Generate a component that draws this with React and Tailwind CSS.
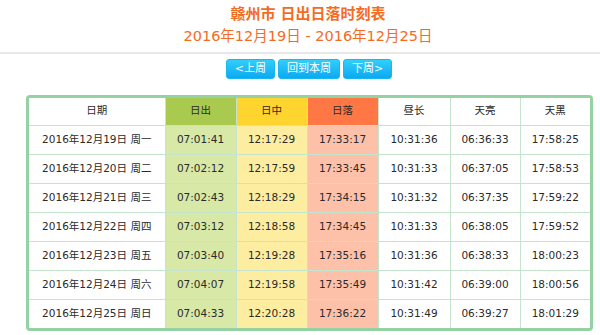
import React from "react";

const rows = [
  ["2016年12月19日 周一", "07:01:41", "12:17:29", "17:33:17", "10:31:36", "06:36:33", "17:58:25"],
  ["2016年12月20日 周二", "07:02:12", "12:17:59", "17:33:45", "10:31:33", "06:37:05", "17:58:53"],
  ["2016年12月21日 周三", "07:02:43", "12:18:29", "17:34:15", "10:31:32", "06:37:35", "17:59:22"],
  ["2016年12月22日 周四", "07:03:12", "12:18:58", "17:34:45", "10:31:33", "06:38:05", "17:59:52"],
  ["2016年12月23日 周五", "07:03:40", "12:19:28", "17:35:16", "10:31:36", "06:38:33", "18:00:23"],
  ["2016年12月24日 周六", "07:04:07", "12:19:58", "17:35:49", "10:31:42", "06:39:00", "18:00:56"],
  ["2016年12月25日 周日", "07:04:33", "12:20:28", "17:36:22", "10:31:49", "06:39:27", "18:01:29"],
];

const bodyBg = ["bg-white", "bg-[#d7e8a7]", "bg-[#fdeda0]", "bg-[#fdc1a9]", "bg-white", "bg-white", "bg-white"];
const widths = ["w-[136px]", "w-[71px]", "w-[71px]", "w-[71px]", "w-[72px]", "w-[70px]", "w-[70px]"];

export default function App() {
  return (
    <div className="w-[600px] h-[335px] bg-white overflow-hidden font-['DejaVu_Sans','Noto_Sans_CJK_SC',sans-serif]">
      {/* TITLE */}
      <div className="pt-[4px] pb-[6px] border-b-2 border-[#e8e8e8] text-center text-[#f36c1f]">
        <h1 className="pl-[16px] text-[15px] font-bold leading-[20px]">赣州市 日出日落时刻表</h1>
        <p className="pl-[16px] text-[14.5px] leading-[20px] mt-[2px]">2016年12月19日 - 2016年12月25日</p>
      </div>

      {/* WEEK NAV */}
      <div className="flex justify-center gap-[3px] mt-[5px] pl-[18px]">
        {["<上周", "回到本周", "下周>"].map((t) => (
          <button
            key={t}
            className="h-[20px] px-[8px] rounded-[3px] border border-[#19b6f2] bg-gradient-to-b from-[#30cffb] to-[#0aa9f1] text-white text-[11px] leading-[18px]"
          >
            {t}
          </button>
        ))}
      </div>

      {/* TABLE */}
      <div className="ml-[26px] mt-[16px] w-[567px] border-[3px] border-[#94d1a3] rounded-[4px] overflow-hidden">
        <table className="w-full border-collapse text-[10.5px] text-[#2a2a2a] text-center table-fixed">
          <thead>
            <tr className="h-[27px]">
              <th className={`${widths[0]} font-normal border-r border-b border-[#c5e4cd] bg-white`}>日期</th>
              <th className={`${widths[1]} font-normal border-r border-b border-[#c5e4cd] bg-[#a9ca4f]`}>日出</th>
              <th className={`${widths[2]} font-normal border-r border-b border-[#c5e4cd] bg-[#fed42f]`}>日中</th>
              <th className={`${widths[3]} font-normal border-r border-b border-[#c5e4cd] bg-[#fe7744]`}>日落</th>
              <th className={`${widths[4]} font-normal border-r border-b border-[#c5e4cd] bg-white`}>昼长</th>
              <th className={`${widths[5]} font-normal border-r border-b border-[#c5e4cd] bg-white`}>天亮</th>
              <th className={`${widths[6]} font-normal border-b border-[#c5e4cd] bg-white`}>天黑</th>
            </tr>
          </thead>
          <tbody>
            {rows.map((r, i) => (
              <tr key={i} className="h-[29px]">
                {r.map((c, j) => (
                  <td
                    key={j}
                    className={`${bodyBg[j]} border-[#c5e4cd] ${j < 6 ? "border-r" : ""} ${i < 6 ? "border-b" : ""}`}
                  >
                    {c}
                  </td>
                ))}
              </tr>
            ))}
          </tbody>
        </table>
      </div>
    </div>
  );
}
